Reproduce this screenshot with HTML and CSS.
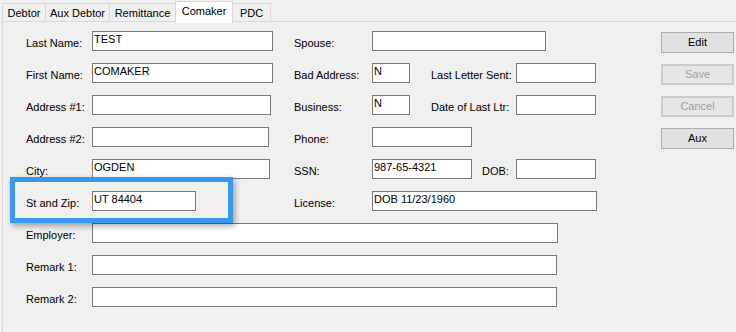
FILE: index.html
```html
<!DOCTYPE html>
<html lang="en">
<head>
    <meta charset="UTF-8">
    <title>Comaker</title>
    <link rel="stylesheet" href="styles.css">
</head>
<body>
    <div class="tabs">
        <div class="tab tab-debtor">Debtor</div>
        <div class="tab tab-aux">Aux Debtor</div>
        <div class="tab tab-remit">Remittance</div>
        <div class="tab tab-comaker active">Comaker</div>
        <div class="tab tab-pdc">PDC</div>
    </div>

    <div class="page">
        <div class="row">
            <div class="left">
                <label class="lbl">Last Name:</label>
                <div class="field w181">TEST</div>
            </div>
            <label class="lbl mid">Spouse:</label>
            <div class="field w174"></div>
            <button class="btn">Edit</button>
        </div>

        <div class="row">
            <div class="left">
                <label class="lbl">First Name:</label>
                <div class="field w181">COMAKER</div>
            </div>
            <label class="lbl mid">Bad Address:</label>
            <div class="field w38">N</div>
            <label class="lbl third">Last Letter Sent:</label>
            <div class="field w80"></div>
            <button class="btn" disabled>Save</button>
        </div>

        <div class="row">
            <div class="left">
                <label class="lbl">Address #1:</label>
                <div class="field w179"></div>
            </div>
            <label class="lbl mid">Business:</label>
            <div class="field w38">N</div>
            <label class="lbl third">Date of Last Ltr:</label>
            <div class="field w80"></div>
            <button class="btn" disabled>Cancel</button>
        </div>

        <div class="row">
            <div class="left">
                <label class="lbl">Address #2:</label>
                <div class="field w177"></div>
            </div>
            <label class="lbl mid">Phone:</label>
            <div class="field w100"></div>
            <button class="btn">Aux</button>
        </div>

        <div class="row">
            <div class="left">
                <label class="lbl">City:</label>
                <div class="field w178">OGDEN</div>
            </div>
            <label class="lbl mid">SSN:</label>
            <div class="field w100">987-65-4321</div>
            <label class="lbl dob">DOB:</label>
            <div class="field w80"></div>
        </div>

        <div class="row">
            <div class="left">
                <label class="lbl">St and Zip:</label>
                <div class="field w104">UT 84404</div>
            </div>
            <label class="lbl mid">License:</label>
            <div class="field w225">DOB 11/23/1960</div>
        </div>

        <div class="row">
            <label class="lbl">Employer:</label>
            <div class="field w466"></div>
        </div>

        <div class="row">
            <label class="lbl">Remark 1:</label>
            <div class="field w465"></div>
        </div>

        <div class="row">
            <label class="lbl">Remark 2:</label>
            <div class="field w465"></div>
        </div>

        <!-- highlight drawn over the St and Zip row -->
        <div class="callout"></div>
    </div>
</body>
</html>
```

FILE: styles.css
```css
html, body {
    margin: 0;
    height: 100%;
    overflow: hidden;
}

body {
    background-color: #f0f0f0;
    color: #000;
    font-family: "Liberation Sans", Arial, sans-serif;
    font-size: 11px;
    line-height: 13px;
}

/* Tab strip */
.tabs {
    display: flex;
    align-items: flex-start;
    height: 21px;
    padding-left: 2px;
}

.tab {
    box-sizing: border-box;
    height: 18px;
    margin-top: 3px;
    margin-left: -1px;
    padding-top: 3px;
    text-align: center;
    border: 1px solid #d9d9d9;
    border-bottom: none;
    background-color: #f0f0f0;
}

.tab-debtor { width: 44px; margin-left: 0; }
.tab-aux { width: 65px; }
.tab-remit { width: 67px; }
.tab-comaker { width: 58px; }
.tab-pdc { width: 39px; }

.tab.active {
    position: relative;
    z-index: 1;
    height: 22px;
    margin-top: 1px;
    background-color: #fff;
}

/* Tab page */
.page {
    position: relative;
    box-sizing: border-box;
    height: calc(100% - 21px);
    margin-left: 2px;
    padding: 9px 0 0 23px;
    border-top: 1px solid #d9d9d9;
    border-left: 1px solid #d9d9d9;
}

.row {
    display: flex;
    align-items: flex-start;
    width: 708px;
    height: 32px;
}

.left {
    display: flex;
    align-items: flex-start;
    width: 268px;
    flex: none;
}

.lbl {
    flex: none;
    width: 66px;
    padding-top: 6px;
    white-space: nowrap;
}

.lbl.mid {
    width: 78px;
}

.lbl.third {
    width: 85px;
    margin-left: 21px;
}

.lbl.dob {
    width: 34px;
    margin-left: 10px;
}

.field {
    box-sizing: border-box;
    flex: none;
    height: 20px;
    padding: 1px 1px 0;
    border: 1px solid #7a7a7a;
    background-color: #fff;
    white-space: nowrap;
    overflow: hidden;
}

.w38 { width: 38px; }
.w80 { width: 80px; }
.w100 { width: 100px; }
.w104 { width: 104px; }
.w174 { width: 174px; }
.w177 { width: 177px; }
.w178 { width: 178px; }
.w179 { width: 179px; }
.w181 { width: 181px; }
.w225 { width: 225px; }
.w465 { width: 465px; }
.w466 { width: 466px; }

/* Buttons */
.btn {
    box-sizing: border-box;
    flex: none;
    width: 73px;
    height: 21px;
    margin: 1px 0 0 auto;
    padding: 0;
    border: 1px solid #adadad;
    background-color: #e1e1e1;
    color: #000;
    font-family: inherit;
    font-size: 11px;
    line-height: 13px;
}

.btn:disabled {
    border: 2px solid #cccccc;
    background-color: #e6e6e6;
    color: #a0a0a0;
}

/* Highlight frame */
.callout {
    position: absolute;
    left: 7px;
    top: 155px;
    box-sizing: border-box;
    width: 223px;
    height: 46px;
    border: 5px solid #3897f0;
    box-shadow: 2px 3px 6px rgba(0, 0, 0, 0.35);
}
```
